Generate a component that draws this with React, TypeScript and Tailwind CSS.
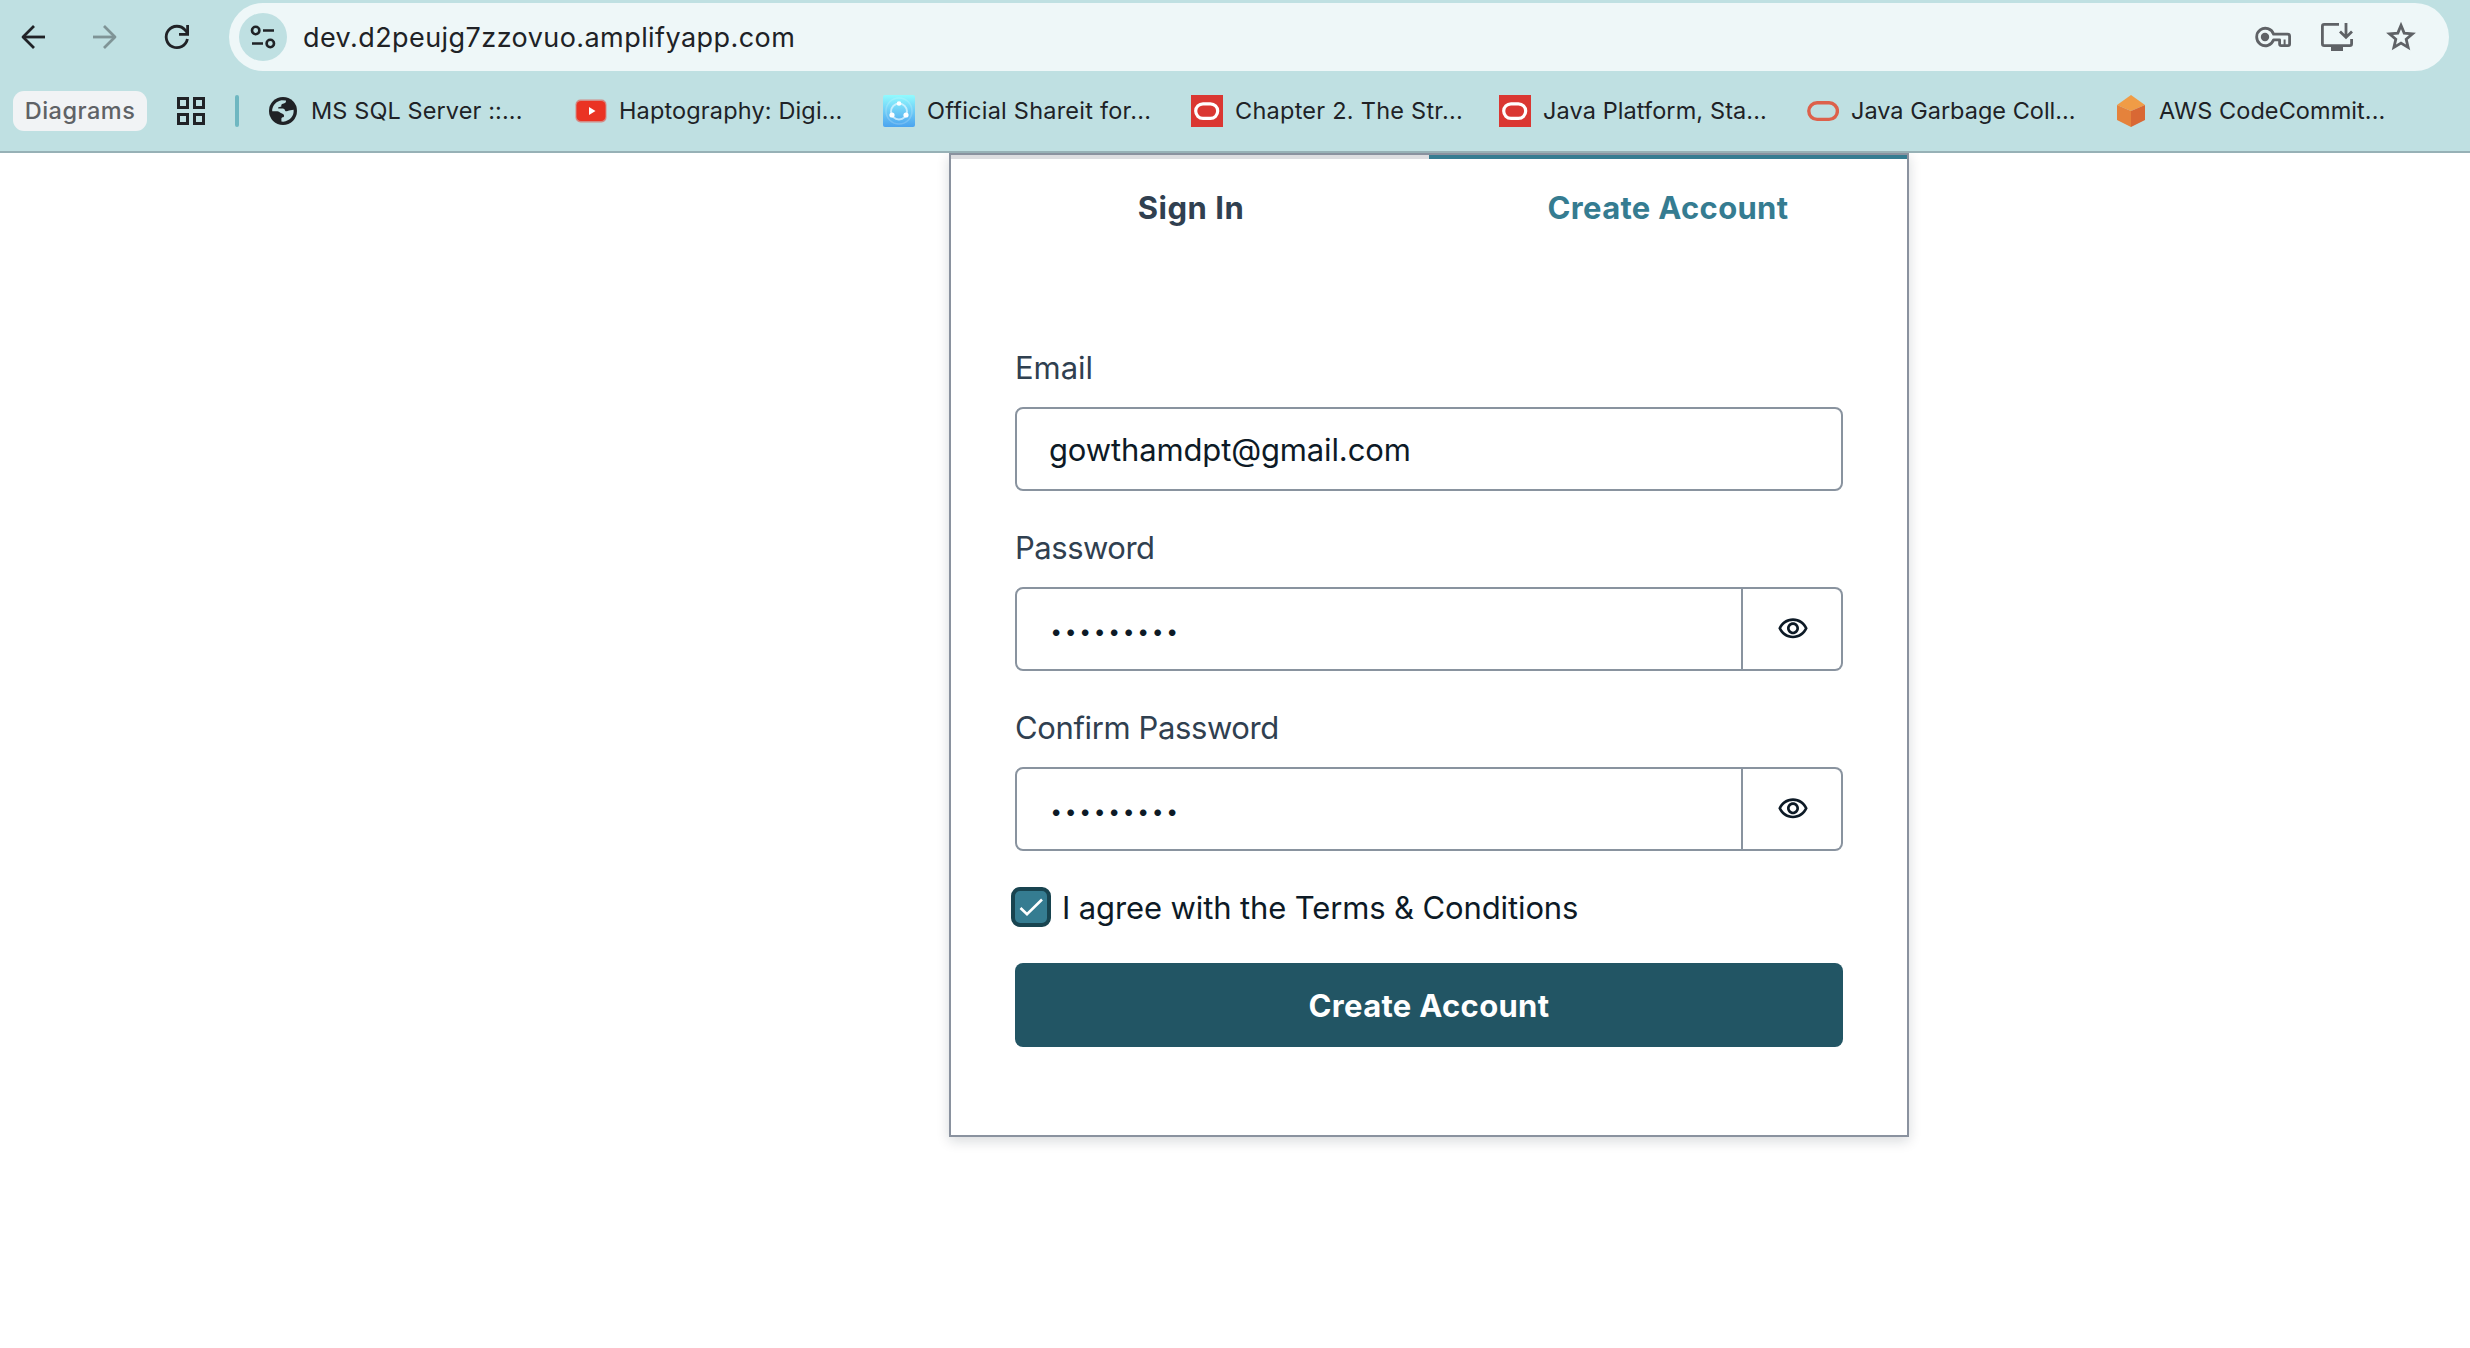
import type { ReactNode } from "react";

function Globe() {
  return (
    <svg width="28" height="28" viewBox="0 0 28 28">
      <circle cx="14" cy="14" r="14" fill="#202226" />
      <path d="M3.2 12.6C3.9 8 7.6 4 12.6 3.2L17 3.6C17.3 5.6 16 6.6 14 6.7C12.4 6.8 12 8 12.4 9.6L9.6 10.2C8.8 10.4 9 11.6 9.8 11.6L13.8 11.6C15 11.6 15.6 12.4 16 13.4C16.6 14.8 18.6 14.2 20 13.6L24.6 12.8C25.2 19 21 24 14.2 24.7L12.4 24.4L12.4 21.4C12.6 20.6 13.4 20.4 14.2 20.2C15.4 19.8 15.4 17.8 14 17L11.4 15.8C10.4 15 9.8 14.2 8.4 14.2L3.2 14.2Z" fill="#bfe0e2" />
    </svg>
  );
}

function YouTube() {
  return (
    <svg width="32" height="32" viewBox="0 0 32 32">
      <rect x="0.5" y="4.5" width="31" height="23" rx="5" fill="#d48a84" />
      <rect x="1.5" y="6" width="29" height="20" rx="4.5" fill="#ea3323" />
      <path d="M14 12v8l6.5-4z" fill="#fff" />
    </svg>
  );
}

function ShareIt() {
  return (
    <svg width="32" height="32" viewBox="0 0 32 32">
      <defs>
        <linearGradient id="shareit" x1="0" y1="0" x2="0" y2="1">
          <stop offset="0" stopColor="#91fbfe" />
          <stop offset="0.5" stopColor="#6fcdf6" />
          <stop offset="1" stopColor="#4ba4ef" />
        </linearGradient>
      </defs>
      <rect width="32" height="32" rx="2" fill="url(#shareit)" />
      <circle cx="16" cy="16" r="13" fill="none" stroke="#fff" strokeOpacity="0.18" strokeWidth="1.6" />
      <circle cx="16" cy="16.5" r="8" fill="none" stroke="#dff6ff" strokeOpacity="0.75" strokeWidth="2" />
      <circle cx="16" cy="8.5" r="2.3" fill="#fff" />
      <circle cx="9" cy="20" r="2.6" fill="#fff" />
      <circle cx="23" cy="20" r="2.6" fill="#fff" />
    </svg>
  );
}

function OracleTile() {
  return (
    <svg width="32" height="32" viewBox="0 0 32 32">
      <rect width="32" height="32" fill="#da3732" />
      <rect x="4.7" y="8.8" width="22" height="14.6" rx="7.3" fill="none" stroke="#fff" strokeWidth="3.2" />
    </svg>
  );
}

function OracleRing() {
  return (
    <svg width="32" height="32" viewBox="0 0 32 32">
      <rect x="1.8" y="7.8" width="28.6" height="16.6" rx="8.3" fill="none" stroke="#dd614b" strokeWidth="3.4" />
    </svg>
  );
}

function CodeCommit() {
  return (
    <svg width="32" height="32" viewBox="0 0 32 32">
      <path d="M16 0 30 10 16 16 2 10z" fill="#f09c46" />
      <path d="M2 10 16 16V32L2 25z" fill="#e5823b" />
      <path d="M30 10 16 16V32L30 25z" fill="#d96834" />
    </svg>
  );
}

const bookmarks: { label: string; icon: ReactNode; tracking: string }[] = [
  { label: "MS SQL Server ::...", icon: <Globe />, tracking: "tracking-[0.1px]" },
  { label: "Haptography: Digi...", icon: <YouTube />, tracking: "tracking-[0.14px]" },
  { label: "Official Shareit for...", icon: <ShareIt />, tracking: "tracking-[0.23px]" },
  { label: "Chapter 2. The Str...", icon: <OracleTile />, tracking: "tracking-[0.25px]" },
  { label: "Java Platform, Sta...", icon: <OracleTile />, tracking: "tracking-[0.1px]" },
  { label: "Java Garbage Coll...", icon: <OracleRing />, tracking: "tracking-[0px]" },
  { label: "AWS CodeCommit...", icon: <CodeCommit />, tracking: "tracking-[0.07px]" },
];

function NavIcons() {
  return (
    <div className="flex gap-9 text-[#202226]">
      <svg width="36" height="36" viewBox="0 0 36 36" fill="none" stroke="currentColor" strokeWidth="2.8">
        <path d="M30 18H8.5" />
        <path d="M19 7 8 18 19 29" strokeLinejoin="round" />
      </svg>
      <svg width="36" height="36" viewBox="0 0 36 36" fill="none" stroke="#7f9496" strokeWidth="2.8">
        <path d="M6 18H27.5" />
        <path d="M17 7 28 18 17 29" strokeLinejoin="round" />
      </svg>
      <svg width="36" height="36" viewBox="0 0 36 36" fill="none" stroke="currentColor" strokeWidth="2.8">
        <path d="M28.4 20A10.7 10.7 0 1 1 26.2 11.2L28.6 14.2" />
        <path d="M28.6 6V15.4H20" />
      </svg>
    </div>
  );
}

function AddressBar() {
  return (
    <div className="ml-[34px] flex h-[68px] w-[2220px] items-center rounded-full bg-[#eef7f8]">
      <div className="ml-2.5 flex size-12 items-center justify-center rounded-full bg-[#bfe0e2]">
        <svg width="28" height="28" viewBox="0 0 28 28" fill="none" stroke="#202226" strokeWidth="2.6">
          <circle cx="6.7" cy="7.5" r="3.7" />
          <path d="M14 7.5h11M3 20.5h11" />
          <circle cx="21.3" cy="20.5" r="3.7" />
        </svg>
      </div>
      <div className="ml-4 pt-px text-[27px] leading-[36px] tracking-[0.43px] text-[#202226]">dev.d2peujg7zzovuo.amplifyapp.com</div>
      <div className="mr-[30px] ml-auto flex items-center">
        <svg className="mr-[26px]" width="40" height="36" viewBox="0 0 40 36" fill="none" stroke="#5f6266" strokeWidth="2.8">
          <circle cx="12" cy="18" r="4.2" fill="#5f6266" stroke="none" />
          <path d="M20.6 20.8A8.7 8.7 0 1 1 20.6 15.2L34.5 15.2Q36.6 15.2 36.6 17.2V25Q36.6 26.6 35 26.6H28.2Q26.6 26.6 26.6 25V20.8Z" strokeLinejoin="round" />
          <path d="M31.6 20.5V26" strokeWidth="2" />
        </svg>
        <svg className="mr-7" width="36" height="36" viewBox="0 0 36 36" fill="none" stroke="#5f6266" strokeWidth="2.8">
          <path d="M20 5.4H5.2Q3.4 5.4 3.4 7.2V24.8Q3.4 26.6 5.2 26.6H30.8Q32.6 26.6 32.6 24.8V20" />
          <path d="M12 26H24V32H12z" fill="#5f6266" stroke="none" />
          <path d="M27 4V18M21 12.5 27 18.4 33 12.5" />
        </svg>
        <svg width="36" height="36" viewBox="0 0 36 36" fill="none" stroke="#5f6266" strokeWidth="2.8">
          <path d="M18 6.4 21.2 14.1 29.5 14.8 23.2 20.3 25.1 28.4 18 24.1 10.9 28.4 12.8 20.3 6.5 14.8 14.8 14.1z" />
        </svg>
      </div>
    </div>
  );
}

function BookmarksBar() {
  return (
    <div className="flex h-[74px] items-center text-[23.5px] leading-[32px] text-[#202226]">
      <div className="ml-[13px] flex h-10 w-[134px] items-center justify-center rounded-[11px] bg-[#f1f3f5] pb-px font-medium tracking-[0.5px] text-[#5f6266]">
        Diagrams
      </div>
      <div className="ml-[30px] grid grid-cols-2 gap-1">
        <div className="size-3 border-[3px] border-[#202226]" />
        <div className="size-3 border-[3px] border-[#202226]" />
        <div className="size-3 border-[3px] border-[#202226]" />
        <div className="size-3 border-[3px] border-[#202226]" />
      </div>
      <div className="ml-[30px] h-8 w-1 rounded-full bg-[#6fb7c1]" />
      <div className="ml-7 flex">
        {bookmarks.map((b) => (
          <div key={b.label} className="flex w-[308px] items-center gap-3">
            <div className="flex size-8 shrink-0 items-center justify-center">{b.icon}</div>
            <div className={`whitespace-nowrap pb-px ${b.tracking}`}>{b.label}</div>
          </div>
        ))}
      </div>
    </div>
  );
}

function PasswordField({ label, tracking }: { label: string; tracking: string }) {
  return (
    <div className="flex flex-col gap-4">
      <div className={`h-12 leading-[49px] text-[#304050] ${tracking}`}>{label}</div>
      <div className="flex h-[84px]">
        <div className="flex w-[728px] items-center rounded-l-lg border-2 border-[#89939f] pt-1 pl-8">
          {"•••••••••".split("").map((dot, i) => (
            <span key={i} className="flex w-[14.5px] justify-center text-[21px] leading-none text-[#0d1a26]">
              {dot}
            </span>
          ))}
        </div>
        <div className="flex flex-1 items-center justify-center rounded-r-lg border-2 border-l-0 border-[#89939f] pl-0.5">
          <svg width="32" height="32" viewBox="0 0 24 24" fill="#0d1a26">
            <path d="M12 6c3.79 0 7.17 2.13 8.82 5.5C19.17 14.87 15.79 17 12 17s-7.17-2.13-8.82-5.5C4.83 8.13 8.21 6 12 6m0-2C7 4 2.73 7.11 1 11.5 2.73 15.89 7 19 12 19s9.27-3.11 11-7.5C21.27 7.11 17 4 12 4zm0 5c1.38 0 2.5 1.12 2.5 2.5S13.38 14 12 14s-2.5-1.12-2.5-2.5S10.62 9 12 9m0-2c-2.48 0-4.5 2.02-4.5 4.5S9.52 16 12 16s4.5-2.02 4.5-4.5S14.48 7 12 7z" />
          </svg>
        </div>
      </div>
    </div>
  );
}

function AuthCard() {
  return (
    <div className="ml-[949px] flex h-[984px] w-[960px] flex-col border-2 border-[#8a929f] bg-white text-[31px] shadow-[0_4px_12px_rgba(13,26,38,0.16)]">
      <div className="grid h-[102px] grid-cols-2 text-center font-bold leading-[98px]">
        <div className="border-t-4 border-[#dddde0] pl-0.5 tracking-[0.5px] text-[#304050]">Sign In</div>
        <div className="border-t-4 border-[#357c91] tracking-[0.32px] text-[#357c91]">Create Account</div>
      </div>
      <div className="mt-[86px] flex flex-col gap-8 px-16">
        <div className="flex flex-col gap-4">
          <div className="h-12 leading-[49px] tracking-[-0.05px] text-[#304050]">Email</div>
          <div className="flex h-[84px] items-center rounded-lg border-2 border-[#89939f] pt-0.5 pl-8 tracking-[-0.14px] text-[#0d1a26]">
            gowthamdpt@gmail.com
          </div>
        </div>
        <PasswordField label="Password" tracking="tracking-[-0.48px]" />
        <PasswordField label="Confirm Password" tracking="tracking-[-0.38px]" />
        <div className="-ml-1 flex h-12 items-center gap-[11px]">
          <div className="flex size-10 items-center justify-center rounded-[9px] border-4 border-[#184450] bg-[#357c91]">
            <svg width="32" height="32" viewBox="0 0 32 32" fill="none" stroke="#fff" strokeWidth="2.6">
              <path d="M5.5 17 12 23.3 27 8.5" />
            </svg>
          </div>
          <div className="pt-0.5 tracking-[-0.12px] text-[#0d1a26]">I agree with the Terms &amp; Conditions</div>
        </div>
        <div className="flex h-[84px] items-center justify-center rounded-lg bg-[#225564] pt-0.5 font-bold tracking-[0.32px] text-white">
          Create Account
        </div>
      </div>
    </div>
  );
}

export default function App() {
  return (
    <div className="h-[1348px] w-[2470px] overflow-hidden bg-white font-['Inter',sans-serif]">
      <div className="relative z-10 h-[153px] border-b-2 border-[#97b1b6] bg-[#bfe0e2]">
        <div className="flex h-[74px] items-center pl-[15px]">
          <NavIcons />
          <AddressBar />
        </div>
        <BookmarksBar />
      </div>
      <AuthCard />
    </div>
  );
}
